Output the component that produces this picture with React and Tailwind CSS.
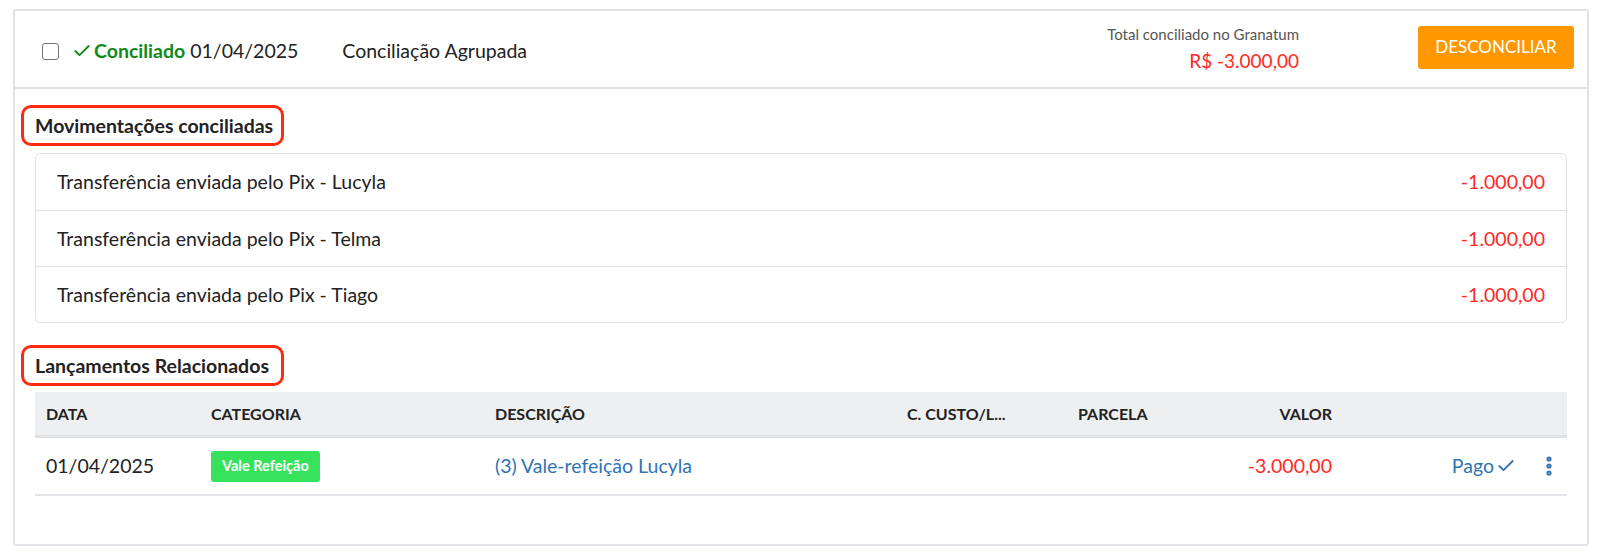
import React from 'react';
import { Check, EllipsisVertical } from 'lucide-react';

const movimentacoes = [
  { id: 1, descricao: 'Transferência enviada pelo Pix - Lucyla', valor: '-1.000,00' },
  { id: 2, descricao: 'Transferência enviada pelo Pix - Telma', valor: '-1.000,00' },
  { id: 3, descricao: 'Transferência enviada pelo Pix - Tiago', valor: '-1.000,00' },
];

const cols = 'grid grid-cols-[165px_284px_412px_171px_112px_163px_1fr_36px] items-center';

const SectionTitle = ({ children }) => (
  <div className="flex">
    <div className="-ml-[14px] w-[263px] border-[3px] border-[#ff2a12] rounded-[10px] pl-[11px] h-[41px] flex items-center">
      <h2 className="text-[19.5px] font-bold text-[#222]">{children}</h2>
    </div>
  </div>
);

const App = () => {
  return (
    <div className="bg-white min-h-[552px] pt-[9px] pl-[13px] pr-[11px] font-['Lato',_'Noto_Sans',_sans-serif] text-[#222]">
      <div className="border-2 border-[#e0e4e7] rounded-[3px] h-[537px]">
        {/* Header */}
        <div className="h-[78px] border-b-2 border-[#e0e4e7] flex items-center pl-[27px] pr-[13px]">
          <span className="w-[17px] h-[17px] border-[1.5px] border-[#767676] rounded-[3px] bg-white mt-[4px]" />
          <span className="ml-[13px] flex items-center text-[#118a1a] font-bold text-[19.5px] mt-[4px]">
            <Check size={20} strokeWidth={2.2} className="mr-[2px]" />
            Conciliado
          </span>
          <span className="ml-[5px] text-[19.5px] mt-[4px]">01/04/2025</span>
          <span className="ml-[44px] text-[19.5px] mt-[4px]">Conciliação Agrupada</span>
          <div className="ml-auto flex flex-col items-end mr-[119px] -mt-[1px]">
            <span className="text-[15px] text-[#555] leading-[20px]">Total conciliado no Granatum</span>
            <span className="text-[19px] text-[#ff2a1f] leading-[26px] mt-[4px]">R$ -3.000,00</span>
          </div>
          <button className="bg-[#ff9800] text-white text-[17px] w-[156px] h-[43px] rounded-[3px] -mt-[4px]">
            DESCONCILIAR
          </button>
        </div>

        {/* Body */}
        <div className="px-[20px] pt-[16px]">
          <SectionTitle>Movimentações conciliadas</SectionTitle>
          <div className="mt-[7px] border border-[#dfe2e5] rounded-[5px]">
            {movimentacoes.map((m, i) => (
              <div
                key={m.id}
                className={`h-[56px] flex items-center justify-between pl-[21px] pr-[21px] text-[19.5px] ${i > 0 ? 'border-t border-[#dfe2e5]' : ''}`}
              >
                <span>{m.descricao}</span>
                <span className="text-[#ff2a1f]">{m.valor}</span>
              </div>
            ))}
          </div>

          <div className="mt-[22px]">
            <SectionTitle>Lançamentos Relacionados</SectionTitle>
          </div>

          <div className="mt-[6px]">
            <div className={`${cols} h-[46px] bg-[#eeeff1] border-b-[3px] border-[#dfe1e4] text-[16px] font-bold text-[#222]`}>
              <span className="pl-[11px]">DATA</span>
              <span className="pl-[11px]">CATEGORIA</span>
              <span className="pl-[11px]">DESCRIÇÃO</span>
              <span className="pl-[11px]">C. CUSTO/L...</span>
              <span className="pl-[11px]">PARCELA</span>
              <span className="text-right pr-[10px]">VALOR</span>
              <span />
              <span />
            </div>
            <div className={`${cols} h-[58px] border-b-2 border-[#e3e5e8] text-[19.5px]`}>
              <span className="pl-[11px]">01/04/2025</span>
              <span className="pl-[11px] flex">
                <span className="inline-flex items-center h-[31px] px-[11px] bg-[#36e25c] text-white text-[14.5px] font-bold rounded-[3px]">
                  Vale Refeição
                </span>
              </span>
              <span className="pl-[11px] text-[#2f74b5]">(3) Vale-refeição Lucyla</span>
              <span />
              <span />
              <span className="text-right pr-[10px] text-[#ff2a1f]">-3.000,00</span>
              <span className="flex items-center justify-end pr-[15px] text-[#2f74b5]">
                Pago
                <Check size={20} strokeWidth={2.2} className="ml-[2px]" />
              </span>
              <span className="flex justify-center text-[#2f74b5]">
                <EllipsisVertical size={24} strokeWidth={3.2} />
              </span>
            </div>
          </div>
        </div>
      </div>
    </div>
  );
};

export default App;
